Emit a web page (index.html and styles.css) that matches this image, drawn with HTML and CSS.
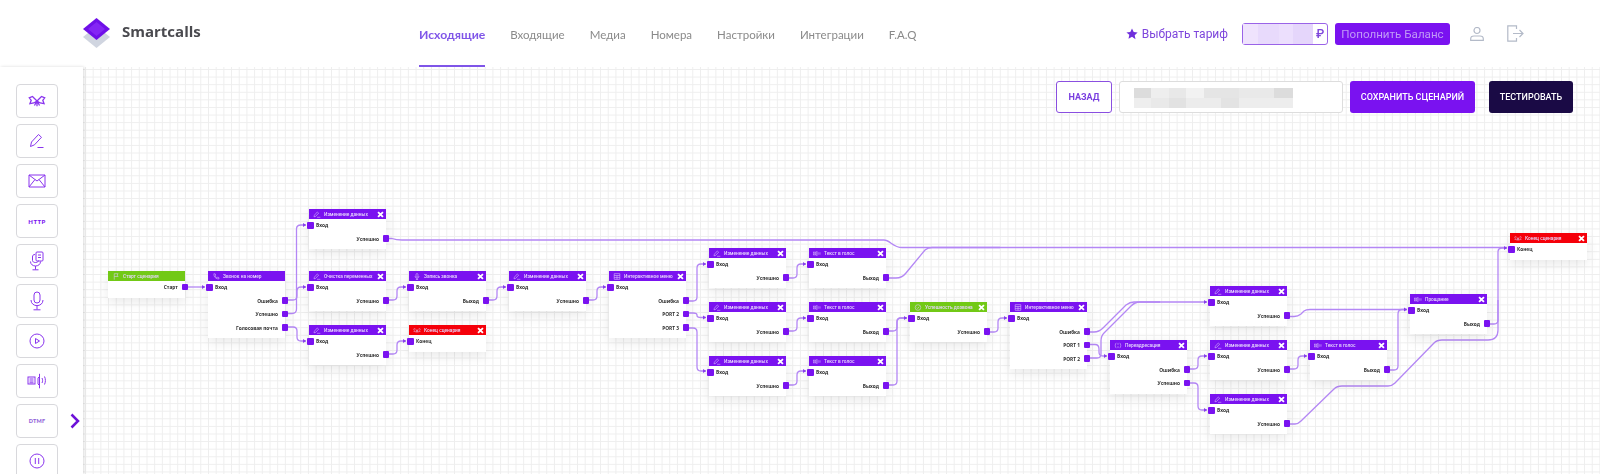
FILE: index.html
```html
<!doctype html>
<html>
<head>
    <title>Smartcalls</title>
    <link rel="stylesheet" href="styles.css">
</head>
<body>
    <svg class="defs" width="0" height="0">
        <symbol id="i-flag" viewBox="0 0 10 10"><path d="M2.5 9.5V1h5.5L6.6 3 8 5H2.5"/></symbol>
        <symbol id="i-phone" viewBox="0 0 10 10"><path d="M2 1l2 .4.5 2-1 .9c.5 1.200 1.400 2 2.600 2.600l.9-1 2 .5.300 2c-4.300.5-7.700-3-7.300-7.400z"/></symbol>
        <symbol id="i-pen" viewBox="0 0 12 10"><path d="M1.500 8.500l.6-2.500 4.400-4.800 2 1.800-4.500 4.800zM6 9.200h5"/></symbol>
        <symbol id="i-mic" viewBox="0 0 10 10"><rect x="3.600" y=".8" width="2.800" height="5.400" rx="1.400"/><path d="M2.200 4.500c0 4 5.600 4 5.600 0M5 7.600v1.600M3.400 9.300h3.200"/></symbol>
        <symbol id="i-voice" viewBox="0 0 14 10"><rect x="1" y="2.500" width="4" height="5"/><path d="M1.800 4.200h2.400M1.800 5.800h2.400M6.500 1l2 2v4l-2 2zM10 3.500c.7 1 .7 2 0 3M11.800 2.500c1 1.500 1 3.500 0 5"/></symbol>
        <symbol id="i-menu" viewBox="0 0 10 10"><path d="M1 1h8v8H1zM1 3.600h8M1 6.300h8M5 3.600V9"/></symbol>
        <symbol id="i-check" viewBox="0 0 10 10"><circle cx="5" cy="5" r="4"/><path d="M3.200 5.100l1.300 1.300 2.300-2.600"/></symbol>
        <symbol id="i-end" viewBox="0 0 14 10"><path d="M7 5L3.500 1.500 1 2.500l1.500 2-1 2.500 3-.5zM7 5l3.500-3.500 2.500 1-1.500 2 1 2.500-3-.5zM7 5L5 8.500M7 5l2 3.500M7 5v4"/></symbol>
        <symbol id="i-redirect" viewBox="0 0 12 10"><path d="M3.500 1C1.300 2.500 1.300 7.500 3.500 9M8.500 1c2.200 1.500 2.200 6.500 0 8M6 1v3M6 6v3"/></symbol>
        <symbol id="i-close" viewBox="0 0 10 10"><path d="M1.500 1.500l7 7M8.500 1.500l-7 7"/></symbol>
    </svg>

    <header class="topbar">
        <div class="brand">
            <svg class="logo" viewBox="0 0 27 30">
                <path d="M13.500 8L27 19 13.500 30 0 19z" fill="#d0d5e0"/>
                <path d="M13.500 0L27 11 13.500 22 0 11z" fill="#6f10e8"/>
                <path d="M13.500 4L22 11l-8.500 7L5 11z" fill="#8426f4"/>
            </svg>
            <span class="brand-name">Smartcalls</span>
        </div>
        <nav class="nav">
            <a class="nav-item active">Исходящие</a>
            <a class="nav-item">Входящие</a>
            <a class="nav-item">Медиа</a>
            <a class="nav-item">Номера</a>
            <a class="nav-item">Настройки</a>
            <a class="nav-item">Интеграции</a>
            <a class="nav-item">F.A.Q</a>
        </nav>
        <div class="account">
            <a class="tariff"><svg class="star" viewBox="0 0 12 12"><path d="M6 .5l1.700 3.600 3.900.5-2.900 2.700.8 3.900L6 8.800l-3.500 1.900.8-3.900L.4 4.600l3.900-.5z"/></svg>Выбрать тариф</a>
            <div class="balance"><span class="balance-hidden"></span><span class="rub">₽</span></div>
            <button class="topup">Пополнить Баланс</button>
            <svg class="user-icon" viewBox="0 0 14 14"><circle cx="7" cy="3.500" r="3"/><path d="M.7 13.300v-1.500c0-1.600 1.500-2.800 3.300-2.800h6c1.800 0 3.300 1.200 3.300 2.800v1.500z"/></svg>
            <svg class="exit-icon" viewBox="0 0 17 17"><path d="M9.500 4V.8H.8v15.400h8.700V13"/><path d="M6 8.500h10M12.500 5l3.500 3.500-3.500 3.500"/></svg>
        </div>
    </header>

    <div class="workspace">
        <aside class="sidebar">
            <div class="tools">
                <button class="tool"><svg class="tool-icon wide"><use href="#i-end"/></svg></button>
                <button class="tool"><svg class="tool-icon pen" viewBox="0 0 16 16"><path d="M1.500 13.500l1-4.500 7-7.500 3 2.800-7 7.500zM8.500 14.500h6"/></svg></button>
                <button class="tool"><svg class="tool-icon wide" viewBox="0 0 18 16"><path d="M1 2h16v12H1zM1 2l8 6 8-6M1 14l6-7.500M17 14l-6-7.500"/></svg></button>
                <button class="tool tool-text">HTTP</button>
                <button class="tool"><svg class="tool-icon tall" viewBox="0 0 16 20"><rect x="7" y="1" width="7" height="9" rx="1"/><path d="M9 4h3M9 6.500h3M6 3.500c-2 0-2.500 1-2.500 2.500v3.500c0 1 1 2 3 2s3-1 3-2M1.500 10.500c0 6 10 6 10 0M6.500 15v3.500M3.500 18.800h6"/></svg></button>
                <button class="tool"><svg class="tool-icon tall" viewBox="0 0 16 20"><rect x="5" y="1" width="6" height="11" rx="3"/><path d="M2 9c0 7.500 12 7.500 12 0M8 15v3.500M4.500 18.800h7"/></svg></button>
                <button class="tool"><svg class="tool-icon round" viewBox="0 0 16 16"><circle cx="8" cy="8" r="7"/><path d="M6.500 5.500L10.500 8l-4 2.500z"/></svg></button>
                <button class="tool"><svg class="tool-icon wide2" viewBox="0 0 20 16"><rect x="1" y="4" width="7" height="7"/><path d="M2.500 6h4M2.500 8h4M2.500 9.800h4M11 5l1.500-1.500v9L11 11zM12.500.8v14.500M15 5c.8 1.500.8 3.500 0 5M17.500 3.500c1.200 2.500 1.200 5.500 0 8"/></svg></button>
                <button class="tool tool-text tool-dtmf">DTMF</button>
                <button class="tool"><svg class="tool-icon round" viewBox="0 0 16 16"><circle cx="8" cy="8" r="7"/><path d="M6.300 5v6M9.700 5v6"/></svg></button>
            </div>
            <svg class="chevron" viewBox="0 0 10 16"><path d="M1.500 1.500L8 8l-6.500 6.500"/></svg>
        </aside>

        <main class="canvas">
            <div class="toolbar">
                <button class="btn btn-back">НАЗАД</button>
                <div class="name-field"><span class="name-hidden"></span></div>
                <button class="btn btn-save">СОХРАНИТЬ СЦЕНАРИЙ</button>
                <button class="btn btn-test">ТЕСТИРОВАТЬ</button>
            </div>

            <svg class="wires" viewBox="83 67 1517 407">
                <path d="M188 287H205"/>
                <path d="M288 300H293Q297 300 297 296V291Q297 287 301 287H306"/>
                <path d="M288 313.500H292Q296.500 313.500 296.500 309V229Q296.500 225 301 225H306"/>
                <path d="M288 327H293Q297 327 297 331V337Q297 341 301 341H306"/>
                <path d="M388 238.500H392Q396 240 402 240H884C890 240 893 247.500 902 247.500H1507"/>
                <path d="M388 300H393Q397 300 397 296V291Q397 287 401 287H406"/>
                <path d="M388 354H393Q397 354 397 350V345Q397 341 401 341H406"/>
                <path d="M488 300H493Q497 300 497 296V291Q497 287 501 287H506"/>
                <path d="M588 300H593Q597 300 597 296V291Q597 287 601 287H606"/>
                <path d="M689 301H693Q697 301 697 297V268Q697 264 701 264H706"/>
                <path d="M689 313H693Q697 313 697 315V315.500Q697 317.500 701 317.500H706"/>
                <path d="M689 328H693Q697 328 697 332V367Q697 371 701 371H706"/>
                <path d="M788 278H793Q797 278 797 274V268Q797 264 801 264H806"/>
                <path d="M788 331H793Q797 331 797 327V322Q797 318 801 318H806"/>
                <path d="M788 385H793Q797 385 797 381V375Q797 371 801 371H806"/>
                <path d="M889 278H896Q902 278 906 273L925 250Q928 247.500 932 247.500H1000"/>
                <path d="M889 331H893Q897 331 897 327V322Q897 318 901 318H907"/>
                <path d="M889 385H893Q897 385 897 381V322Q897 318 901 318H907"/>
                <path d="M990 332H994Q998 332 998 328V322Q998 318 1002 318H1007"/>
                <path d="M1090 332H1094Q1099 332 1103 328L1126 305Q1130 302 1134 302H1207"/>
                <path d="M1090 344.500H1095Q1099 344.500 1099 349V352Q1099 356 1103 356H1107"/>
                <path d="M1090 358H1097Q1101 358 1101 354V341Q1101 336 1104 333L1131 306Q1135 302 1140 302H1160"/>
                <path d="M1190 369H1194Q1198 369 1198 365V360Q1198 356 1202 356H1207"/>
                <path d="M1190 383H1194Q1198 383 1198 387V406Q1198 410 1202 410H1207"/>
                <path d="M1289 316.500H1294Q1298 316.500 1301 314L1304 311Q1306 309.500 1310 309.500H1407"/>
                <path d="M1290 369H1294Q1298 369 1298 365V360Q1298 356 1302 356H1307"/>
                <path d="M1390 370H1394Q1398 370 1398 366V314Q1398 309.500 1402 309.500H1407"/>
                <path d="M1490 324H1494Q1498 324 1498 320V252Q1498 248 1502 248H1507"/>
                <path d="M1290 424H1295Q1298 424 1301 421L1334 389Q1337 386 1342 386H1388Q1392 386 1395 383L1434 343Q1437 340 1442 340H1488Q1498 340 1498 330V300"/>
                <g class="arrows">
                    <path d="M202 285v4l3-2z"/><path d="M303 285v4l3-2z"/><path d="M303 223v4l3-2z"/><path d="M303 339v4l3-2z"/>
                    <path d="M403 285v4l3-2z"/><path d="M403 339v4l3-2z"/><path d="M503 285v4l3-2z"/><path d="M603 285v4l3-2z"/>
                    <path d="M703 262v4l3-2z"/><path d="M703 315.500v4l3-2z"/><path d="M703 369v4l3-2z"/>
                    <path d="M803 262v4l3-2z"/><path d="M803 316v4l3-2z"/><path d="M803 369v4l3-2z"/>
                    <path d="M904 316v4l3-2z"/><path d="M1004 316v4l3-2z"/><path d="M1104 354v4l3-2z"/>
                    <path d="M1204 300v4l3-2z"/><path d="M1204 354v4l3-2z"/><path d="M1204 408v4l3-2z"/>
                    <path d="M1304 354v4l3-2z"/><path d="M1404 307.500v4l3-2z"/><path d="M1504 246v4l3-2z"/>
                </g>
            </svg>

            <div class="node" style="left:25px;top:204px">
                <div class="node-head green"><svg class="node-icon"><use href="#i-flag"/></svg><span class="node-title">Старт сценария</span></div>
                <div class="row out">Старт<i class="port"></i></div>
            </div>
            <div class="node" style="left:125px;top:204px">
                <div class="node-head"><svg class="node-icon"><use href="#i-phone"/></svg><span class="node-title">Звонок на номер</span></div>
                <div class="row in"><i class="port"></i>Вход</div>
                <div class="row out">Ошибка<i class="port"></i></div>
                <div class="row out">Успешно<i class="port"></i></div>
                <div class="row out">Голосовая почта<i class="port"></i></div>
            </div>
            <div class="node" style="left:226px;top:142px">
                <div class="node-head"><svg class="node-icon"><use href="#i-pen"/></svg><span class="node-title">Изменение данных</span><svg class="node-close"><use href="#i-close"/></svg></div>
                <div class="row in"><i class="port"></i>Вход</div>
                <div class="row out">Успешно<i class="port"></i></div>
            </div>
            <div class="node" style="left:226px;top:204px">
                <div class="node-head"><svg class="node-icon"><use href="#i-pen"/></svg><span class="node-title">Очистка переменных</span><svg class="node-close"><use href="#i-close"/></svg></div>
                <div class="row in"><i class="port"></i>Вход</div>
                <div class="row out">Успешно<i class="port"></i></div>
            </div>
            <div class="node" style="left:226px;top:258px">
                <div class="node-head"><svg class="node-icon"><use href="#i-pen"/></svg><span class="node-title">Изменение данных</span><svg class="node-close"><use href="#i-close"/></svg></div>
                <div class="row in"><i class="port"></i>Вход</div>
                <div class="row out">Успешно<i class="port"></i></div>
            </div>
            <div class="node" style="left:326px;top:204px">
                <div class="node-head"><svg class="node-icon"><use href="#i-mic"/></svg><span class="node-title">Запись звонка</span><svg class="node-close"><use href="#i-close"/></svg></div>
                <div class="row in"><i class="port"></i>Вход</div>
                <div class="row out">Выход<i class="port"></i></div>
            </div>
            <div class="node" style="left:326px;top:258px">
                <div class="node-head red"><svg class="node-icon"><use href="#i-end"/></svg><span class="node-title">Конец сценария</span><svg class="node-close"><use href="#i-close"/></svg></div>
                <div class="row in"><i class="port"></i>Конец</div>
            </div>
            <div class="node" style="left:426px;top:204px">
                <div class="node-head"><svg class="node-icon"><use href="#i-pen"/></svg><span class="node-title">Изменение данных</span><svg class="node-close"><use href="#i-close"/></svg></div>
                <div class="row in"><i class="port"></i>Вход</div>
                <div class="row out">Успешно<i class="port"></i></div>
            </div>
            <div class="node" style="left:526px;top:204px">
                <div class="node-head"><svg class="node-icon"><use href="#i-menu"/></svg><span class="node-title">Интерактивное меню</span><svg class="node-close"><use href="#i-close"/></svg></div>
                <div class="row in"><i class="port"></i>Вход</div>
                <div class="row out">Ошибка<i class="port"></i></div>
                <div class="row out">PORT 2<i class="port"></i></div>
                <div class="row out">PORT 3<i class="port"></i></div>
            </div>
            <div class="node" style="left:626px;top:181px">
                <div class="node-head"><svg class="node-icon"><use href="#i-pen"/></svg><span class="node-title">Изменение данных</span><svg class="node-close"><use href="#i-close"/></svg></div>
                <div class="row in"><i class="port"></i>Вход</div>
                <div class="row out">Успешно<i class="port"></i></div>
            </div>
            <div class="node" style="left:726px;top:181px">
                <div class="node-head"><svg class="node-icon"><use href="#i-voice"/></svg><span class="node-title">Текст в голос</span><svg class="node-close"><use href="#i-close"/></svg></div>
                <div class="row in"><i class="port"></i>Вход</div>
                <div class="row out">Выход<i class="port"></i></div>
            </div>
            <div class="node" style="left:626px;top:235px">
                <div class="node-head"><svg class="node-icon"><use href="#i-pen"/></svg><span class="node-title">Изменение данных</span><svg class="node-close"><use href="#i-close"/></svg></div>
                <div class="row in"><i class="port"></i>Вход</div>
                <div class="row out">Успешно<i class="port"></i></div>
            </div>
            <div class="node" style="left:726px;top:235px">
                <div class="node-head"><svg class="node-icon"><use href="#i-voice"/></svg><span class="node-title">Текст в голос</span><svg class="node-close"><use href="#i-close"/></svg></div>
                <div class="row in"><i class="port"></i>Вход</div>
                <div class="row out">Выход<i class="port"></i></div>
            </div>
            <div class="node" style="left:626px;top:289px">
                <div class="node-head"><svg class="node-icon"><use href="#i-pen"/></svg><span class="node-title">Изменение данных</span><svg class="node-close"><use href="#i-close"/></svg></div>
                <div class="row in"><i class="port"></i>Вход</div>
                <div class="row out">Успешно<i class="port"></i></div>
            </div>
            <div class="node" style="left:726px;top:289px">
                <div class="node-head"><svg class="node-icon"><use href="#i-voice"/></svg><span class="node-title">Текст в голос</span><svg class="node-close"><use href="#i-close"/></svg></div>
                <div class="row in"><i class="port"></i>Вход</div>
                <div class="row out">Выход<i class="port"></i></div>
            </div>
            <div class="node" style="left:827px;top:235px">
                <div class="node-head green"><svg class="node-icon"><use href="#i-check"/></svg><span class="node-title">Успешность дозвона</span><svg class="node-close"><use href="#i-close"/></svg></div>
                <div class="row in"><i class="port"></i>Вход</div>
                <div class="row out">Успешно<i class="port"></i></div>
            </div>
            <div class="node" style="left:927px;top:235px">
                <div class="node-head"><svg class="node-icon"><use href="#i-menu"/></svg><span class="node-title">Интерактивное меню</span><svg class="node-close"><use href="#i-close"/></svg></div>
                <div class="row in"><i class="port"></i>Вход</div>
                <div class="row out">Ошибка<i class="port"></i></div>
                <div class="row out">PORT 1<i class="port"></i></div>
                <div class="row out">PORT 2<i class="port"></i></div>
            </div>
            <div class="node" style="left:1027px;top:273px">
                <div class="node-head"><svg class="node-icon"><use href="#i-redirect"/></svg><span class="node-title">Переадресация</span><svg class="node-close"><use href="#i-close"/></svg></div>
                <div class="row in"><i class="port"></i>Вход</div>
                <div class="row out">Ошибка<i class="port"></i></div>
                <div class="row out">Успешно<i class="port"></i></div>
            </div>
            <div class="node" style="left:1127px;top:219px">
                <div class="node-head"><svg class="node-icon"><use href="#i-pen"/></svg><span class="node-title">Изменение данных</span><svg class="node-close"><use href="#i-close"/></svg></div>
                <div class="row in"><i class="port"></i>Вход</div>
                <div class="row out">Успешно<i class="port"></i></div>
            </div>
            <div class="node" style="left:1127px;top:273px">
                <div class="node-head"><svg class="node-icon"><use href="#i-pen"/></svg><span class="node-title">Изменение данных</span><svg class="node-close"><use href="#i-close"/></svg></div>
                <div class="row in"><i class="port"></i>Вход</div>
                <div class="row out">Успешно<i class="port"></i></div>
            </div>
            <div class="node" style="left:1127px;top:327px">
                <div class="node-head"><svg class="node-icon"><use href="#i-pen"/></svg><span class="node-title">Изменение данных</span><svg class="node-close"><use href="#i-close"/></svg></div>
                <div class="row in"><i class="port"></i>Вход</div>
                <div class="row out">Успешно<i class="port"></i></div>
            </div>
            <div class="node" style="left:1227px;top:273px">
                <div class="node-head"><svg class="node-icon"><use href="#i-voice"/></svg><span class="node-title">Текст в голос</span><svg class="node-close"><use href="#i-close"/></svg></div>
                <div class="row in"><i class="port"></i>Вход</div>
                <div class="row out">Выход<i class="port"></i></div>
            </div>
            <div class="node" style="left:1327px;top:227px">
                <div class="node-head"><svg class="node-icon"><use href="#i-voice"/></svg><span class="node-title">Прощание</span><svg class="node-close"><use href="#i-close"/></svg></div>
                <div class="row in"><i class="port"></i>Вход</div>
                <div class="row out">Выход<i class="port"></i></div>
            </div>
            <div class="node" style="left:1427px;top:166px">
                <div class="node-head red"><svg class="node-icon"><use href="#i-end"/></svg><span class="node-title">Конец сценария</span><svg class="node-close"><use href="#i-close"/></svg></div>
                <div class="row in"><i class="port"></i>Конец</div>
            </div>
        </main>
    </div>
</body>
</html>
```

FILE: styles.css
```css
html, body {
    margin: 0;
    height: 474px;
    overflow: hidden;
}
body {
    font-family: 'Lato', 'Open Sans', sans-serif;
    background-color: #fff;
    color: #333;
    filter: blur(0.35px);
}
button {
    font-family: inherit;
    cursor: pointer;
}
.defs {
    position: absolute;
}

/* top bar */
.topbar {
    display: flex;
    align-items: center;
    height: 67px;
    padding: 0 76px 0 83px;
}
.brand {
    display: flex;
    align-items: center;
    width: 336px;
    margin-top: -1px;
}
.logo {
    width: 27px;
    height: 30px;
    margin-right: 12px;
}
.brand-name {
    font-family: 'Open Sans', sans-serif;
    font-size: 15px;
    font-weight: 700;
    color: #4a4a4f;
    margin-top: -4px;
}
.nav {
    display: flex;
    gap: 25px;
    height: 67px;
}
.nav-item {
    box-sizing: border-box;
    height: 67px;
    padding-top: 26px;
    font-size: 11.500px;
    line-height: 18px;
    color: #8a8a8a;
}
.nav-item.active {
    color: #7f55e8;
    font-size: 12.200px;
    font-weight: 700;
    border-bottom: 2px solid #7f55e8;
}
.account {
    display: flex;
    align-items: center;
    margin-left: auto;
}
.tariff {
    display: flex;
    align-items: center;
    font-family: 'Roboto', sans-serif;
    font-size: 12px;
    color: #7d45dc;
    white-space: nowrap;
    margin-right: 14px;
}
.star {
    width: 12px;
    height: 12px;
    margin-right: 4px;
    fill: #6f2fdc;
}
.balance {
    display: flex;
    align-items: center;
    box-sizing: border-box;
    width: 86px;
    height: 22px;
    margin-right: 7px;
    border: 1px solid #9a63e8;
    border-radius: 3px;
    background-color: #fff;
}
.balance-hidden {
    width: 70px;
    height: 20px;
    background: linear-gradient(90deg, #efe3fd 0 22%, #e8dafc 22% 52%, #ecdffd 52% 72%, #e5d6fb 72%);
}
.rub {
    flex: 1;
    text-align: center;
    font-family: 'Roboto', sans-serif;
    font-size: 12px;
    font-weight: 500;
    color: #7d45dc;
}
.topup {
    width: 115px;
    height: 22px;
    padding: 0;
    border: none;
    border-radius: 3px;
    background-color: #7a12f0;
    color: #c09af6;
    font-family: 'Roboto', sans-serif;
    font-size: 11.600px;
    margin-right: 20px;
}
.user-icon, .exit-icon {
    fill: none;
    stroke: #b3bac8;
    stroke-width: 1.200;
}
.user-icon {
    width: 14px;
    height: 14px;
    margin-right: 23px;
}
.exit-icon {
    width: 17px;
    height: 17px;
}

/* left tools */
.workspace {
    display: flex;
    height: 407px;
}
.sidebar {
    position: relative;
    z-index: 2;
    flex: none;
    width: 83px;
    height: 407px;
    overflow: hidden;
    background-color: #fff;
    box-shadow: 1px 0 3px rgba(0,0,0,0.15);
}
.tools {
    display: flex;
    flex-direction: column;
    gap: 6px;
    padding: 17px 0 0 16px;
}
.tool {
    flex: none;
    display: flex;
    align-items: center;
    justify-content: center;
    width: 42px;
    height: 34px;
    padding: 0;
    background-color: #fff;
    border: 1px solid #d8d8dc;
    border-radius: 4px;
}
.tool-text {
    font-size: 6px;
    font-weight: 900;
    letter-spacing: 0.4px;
    color: #7a12f0;
}
.tool-dtmf {
    font-size: 5.500px;
    letter-spacing: 0.2px;
    color: #8f62d8;
}
.tool-icon {
    width: 16px;
    height: 14px;
    fill: none;
    stroke: #8a35ee;
    stroke-width: 1;
}
.tool-icon.pen {
    width: 16px;
    height: 16px;
}
.tool-icon.wide {
    width: 18px;
    height: 16px;
}
.tool-icon.tall {
    width: 16px;
    height: 20px;
}
.tool-icon.round {
    width: 16px;
    height: 16px;
}
.tool-icon.wide2 {
    width: 20px;
    height: 16px;
}
.chevron {
    position: absolute;
    left: 70px;
    top: 346px;
    width: 10px;
    height: 16px;
    fill: none;
    stroke: #6d12d8;
    stroke-width: 2.500;
}

/* diagram */
.canvas {
    position: relative;
    flex: 1;
    overflow: hidden;
    background-color: #fff;
    background-image:
        linear-gradient(#eeeeee 1px, transparent 1px),
        linear-gradient(90deg, #eeeeee 1px, transparent 1px);
    background-size: 7.7px 7.6px;
    background-position: 2px 2px;
}
.toolbar {
    position: absolute;
    top: 14px;
    right: 27px;
    z-index: 3;
    display: flex;
}
.btn {
    height: 32px;
    border: none;
    border-radius: 3px;
    padding: 0;
    font-family: 'Roboto', sans-serif;
    font-size: 9px;
    font-weight: 500;
    color: #fff;
}
.btn-back {
    width: 56px;
    margin-right: 7px;
    background-color: #fff;
    border: 1px solid #8a4fe0;
    color: #7a3fe0;
    font-weight: 700;
}
.name-field {
    box-sizing: border-box;
    width: 224px;
    height: 32px;
    margin-right: 7px;
    padding: 6px 0 0 14px;
    background-color: #fff;
    border: 1px solid #ddd;
    border-radius: 3px;
}
.name-hidden {
    display: block;
    width: 159px;
    height: 20px;
    background:
        linear-gradient(90deg, #dcdcdc 0 11%, #eeeeee 11% 22%, #e8e8e8 22% 33%, #f2f2f2 33% 44%, #e5e5e5 44% 66%, #e9e9e9 66% 88%, #dcdcdc 88%) 0 0 / 100% 50% no-repeat,
        linear-gradient(90deg, #eeeeee 0 11%, #e9e9e9 11% 22%, #e2e2e2 22% 33%, #ececec 33% 55%, #e3e3e3 55% 66%, #ededed 66% 100%) 0 100% / 100% 50% no-repeat;
}
.btn-save {
    width: 125px;
    margin-right: 14px;
    background-color: #7a12f0;
}
.btn-test {
    width: 84px;
    background-color: #1a0a45;
}
.wires {
    position: absolute;
    left: 0;
    top: 0;
    width: 1517px;
    height: 407px;
    fill: none;
    stroke: #b487f5;
    stroke-width: 1.300;
}
.arrows path {
    fill: #8a3ff0;
    stroke: none;
}

.node {
    position: absolute;
    box-sizing: border-box;
    width: 77px;
    padding-bottom: 3px;
    background-color: #fff;
    box-shadow: 0 4px 12px rgba(0,0,0,0.09);
}
.node-head {
    display: flex;
    align-items: center;
    height: 10px;
    padding: 0 2px 0 4px;
    background-color: #7a12f0;
    color: #e6d6fc;
}
.node-head.green {
    background-color: #72c916;
}
.node-head.red {
    background-color: #f5000a;
}
.node-icon {
    flex: none;
    width: 8px;
    height: 7px;
    margin-right: 3px;
    fill: none;
    stroke: #e0ccfb;
    stroke-width: 0.800;
}
.node-title {
    flex: 1;
    font-family: 'Roboto', sans-serif;
    font-size: 4.800px;
    font-weight: 500;
    white-space: nowrap;
    overflow: hidden;
}
.node-close {
    flex: none;
    width: 7px;
    height: 7px;
    fill: none;
    stroke: #fff;
    stroke-width: 2.600;
}
.row {
    position: relative;
    height: 13.500px;
    padding: 0 7px;
    font-family: 'Open Sans', sans-serif;
    font-size: 4.800px;
    font-weight: 700;
    line-height: 13px;
    color: #2c2c2c;
}
.row.out {
    text-align: right;
    line-height: 12px;
}
.port {
    position: absolute;
    top: 3px;
    width: 6.500px;
    height: 6.500px;
    border-radius: 1px;
    background-color: #7a12f0;
}
.row.in .port {
    left: -2px;
}
.row.out .port {
    top: 2.500px;
    right: -3px;
}
```
